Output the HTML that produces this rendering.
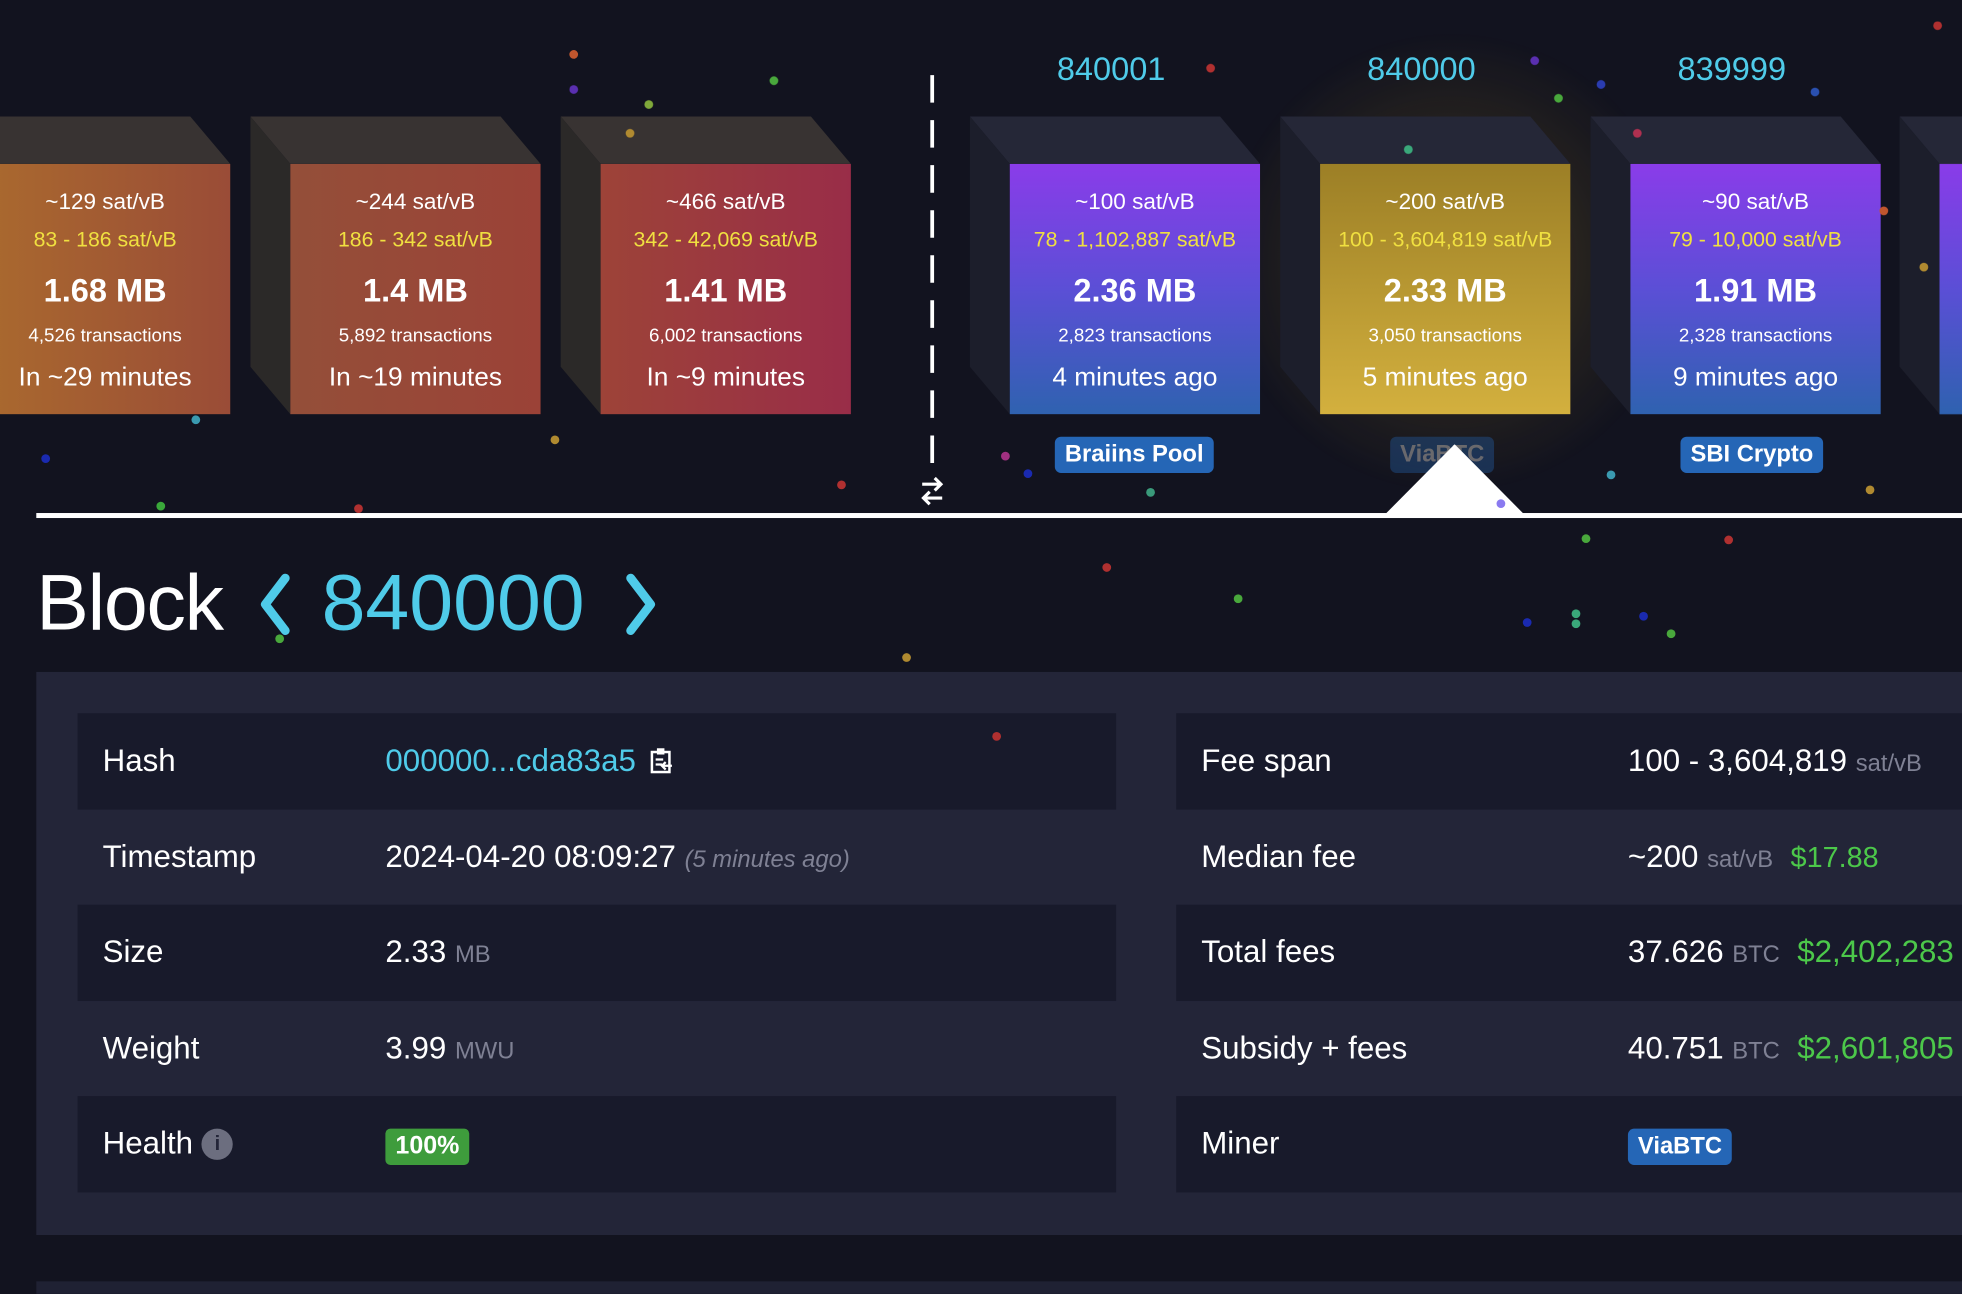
<!DOCTYPE html>
<html><head><meta charset="utf-8"><style>
*{margin:0;padding:0;box-sizing:border-box}
html,body{width:1962px;height:1288px;overflow:hidden;background:#12131f;font-family:"Liberation Sans",sans-serif;color:#fff}
#w{position:absolute;left:0;top:0;width:1568px;height:1030px;transform:scale(1.25128);transform-origin:0 0}
.abs{position:absolute}
.blk{position:absolute;top:93px;width:232px;height:238px}
.blk .top{position:absolute;left:0;top:0;width:232px;height:38px;clip-path:polygon(0 0,200px 0,232px 38px,32px 38px)}
.blk .side{position:absolute;left:0;top:0;width:32px;height:238px;clip-path:polygon(0 0,32px 38px,32px 238px,0 200px)}
.blk .front{position:absolute;left:32px;top:38px;width:200px;height:200px;text-align:center}
.front div{position:absolute;left:0;right:0;white-space:nowrap}
.f1{top:20px;font-size:18px}
.f2{top:51px;font-size:17px;color:#f0e040}
.f3{top:86px;font-size:26px;font-weight:bold}
.f4{top:129px;font-size:15px}
.f5{top:159px;font-size:21px}
.mp .top{background:#383332}.mp .side{background:#2b2928}
.mn .top{background:#252737}.mn .side{background:#1c1e2b}
.pur{background:linear-gradient(180deg,#8a3ce9,#5b4fd6 50%,#2f62b0)}
.gold{background:linear-gradient(180deg,#9c7f26,#d3b03e)}
.h{position:absolute;top:40px;font-size:26px;color:#4fcbe9;width:200px;text-align:center}
.badge{position:absolute;top:349px;height:29px;border-radius:5px;background:#2566b6;font-weight:bold;font-size:19px;line-height:29px;padding:0 8px}
.dot{position:absolute;width:7px;height:7px;border-radius:50%}
.row{position:absolute;height:77px;font-size:25px;line-height:77px}
.d{background:#181a2b}
.lab{position:absolute;left:20px}
.val{position:absolute;white-space:nowrap}
.u{color:#7f8194;font-size:19px}
.g{color:#4cc84a}
</style></head><body><div id="w">
<div class="abs" style="left:960px;top:10px;width:400px;height:400px;border-radius:50%;background:radial-gradient(circle,rgba(150,120,30,.35),rgba(150,120,30,0) 65%)"></div>

<div class="blk mp" style="left:-48px"><div class="top"></div><div class="side"></div><div class="front" style="background:linear-gradient(90deg,#aa6a2e,#9a4c37)">
<div class="f1">~129 sat/vB</div><div class="f2">83 - 186 sat/vB</div><div class="f3">1.68 MB</div><div class="f4">4,526 transactions</div><div class="f5">In ~29 minutes</div></div></div>
<div class="blk mp" style="left:200px"><div class="top"></div><div class="side"></div><div class="front" style="background:linear-gradient(90deg,#944f39,#9b4237)">
<div class="f1">~244 sat/vB</div><div class="f2">186 - 342 sat/vB</div><div class="f3">1.4 MB</div><div class="f4">5,892 transactions</div><div class="f5">In ~19 minutes</div></div></div>
<div class="blk mp" style="left:448px"><div class="top"></div><div class="side"></div><div class="front" style="background:linear-gradient(90deg,#9d4338,#992d48)">
<div class="f1">~466 sat/vB</div><div class="f2">342 - 42,069 sat/vB</div><div class="f3">1.41 MB</div><div class="f4">6,002 transactions</div><div class="f5">In ~9 minutes</div></div></div>

<svg class="abs" style="left:735px;top:55px" width="20" height="350"><line x1="10" y1="5" x2="10" y2="320" stroke="#fff" stroke-width="3" stroke-dasharray="22,14"/>
<path d="M2 332h14M12 327l5 5-5 5M18 343H4M8 338l-5 5 5 5" stroke="#fff" stroke-width="2.5" fill="none"/></svg>

<div class="h" style="left:788px">840001</div><div class="h" style="left:1036px">840000</div><div class="h" style="left:1284px">839999</div>
<div class="blk mn" style="left:775px"><div class="top"></div><div class="side"></div><div class="front pur">
<div class="f1">~100 sat/vB</div><div class="f2">78 - 1,102,887 sat/vB</div><div class="f3">2.36 MB</div><div class="f4">2,823 transactions</div><div class="f5">4 minutes ago</div></div></div>
<div class="blk mn" style="left:1023px"><div class="top"></div><div class="side"></div><div class="front gold">
<div class="f1">~200 sat/vB</div><div class="f2">100 - 3,604,819 sat/vB</div><div class="f3">2.33 MB</div><div class="f4">3,050 transactions</div><div class="f5">5 minutes ago</div></div></div>
<div class="blk mn" style="left:1271px"><div class="top"></div><div class="side"></div><div class="front pur">
<div class="f1">~90 sat/vB</div><div class="f2">79 - 10,000 sat/vB</div><div class="f3">1.91 MB</div><div class="f4">2,328 transactions</div><div class="f5">9 minutes ago</div></div></div>
<div class="blk mn" style="left:1518px"><div class="top"></div><div class="side"></div><div class="front pur"></div></div>

<div class="badge" style="left:843px">Braiins Pool</div>
<div class="badge" style="left:1111px;opacity:.35">ViaBTC</div>
<div class="badge" style="left:1343px">SBI Crypto</div>
<div class="abs" style="left:1106px;top:355px;width:113px;height:57px;background:#fff;clip-path:polygon(50% 0,100% 100%,0 100%)"></div>
<div class="abs" style="left:29px;top:410px;width:1539px;height:4px;background:#fff"></div>

<div class="abs" style="left:29px;top:442px;font-size:63px;line-height:80px;white-space:nowrap;letter-spacing:-1px">Block</div>
<svg class="abs" style="left:204px;top:458px" width="32" height="50"><path d="M24 4 8 25l16 21" stroke="#4fcbe9" stroke-width="7" fill="none" stroke-linecap="round" stroke-linejoin="round"/></svg>
<div class="abs" style="left:257px;top:442px;font-size:63px;line-height:80px;color:#4fcbe9">840000</div>
<svg class="abs" style="left:496px;top:458px" width="32" height="50"><path d="M8 4l16 21L8 46" stroke="#4fcbe9" stroke-width="7" fill="none" stroke-linecap="round" stroke-linejoin="round"/></svg>

<div class="abs" style="left:29px;top:537px;width:1539px;height:450px;background:#232538"></div>
<div class="row d" style="left:62px;top:570px;width:830px"><span class="lab">Hash</span><span class="val" style="left:246px;color:#4fcbe9">000000...cda83a5 <svg width="20" height="22" style="vertical-align:-3px;margin-left:4px" viewBox="0 0 20 22"><rect x="2" y="4" width="14" height="16" fill="none" stroke="#fff" stroke-width="2"/><rect x="6" y="1" width="6" height="5" fill="#fff"/><path d="M5 10h6M5 14h5M18 15h-7M13 12l-3 3 3 3" stroke="#fff" stroke-width="1.8" fill="none"/></svg></span></div>
<div class="row" style="left:62px;top:647px;width:830px"><span class="lab">Timestamp</span><span class="val" style="left:246px">2024-04-20 08:09:27 <i class="u">(5 minutes ago)</i></span></div>
<div class="row d" style="left:62px;top:723px;width:830px"><span class="lab">Size</span><span class="val" style="left:246px">2.33 <span class="u">MB</span></span></div>
<div class="row" style="left:62px;top:800px;width:830px"><span class="lab">Weight</span><span class="val" style="left:246px">3.99 <span class="u">MWU</span></span></div>
<div class="row d" style="left:62px;top:876px;width:830px"><span class="lab">Health <span style="display:inline-block;width:25px;height:25px;border-radius:50%;background:#6c6e7f;color:#232538;font-size:16px;line-height:25px;text-align:center;vertical-align:3px;font-weight:bold">i</span></span><span class="val" style="left:246px;top:26px;height:29px;line-height:29px;background:#3e9c3c;border-radius:4px;padding:0 8px;font-weight:bold;font-size:20px">100%</span></div>

<div class="row d" style="left:940px;top:570px;width:628px"><span class="lab">Fee span</span><span class="val" style="left:361px">100 - 3,604,819 <span class="u">sat/vB</span></span></div>
<div class="row" style="left:940px;top:647px;width:628px"><span class="lab">Median fee</span><span class="val" style="left:361px">~200 <span class="u">sat/vB</span> &nbsp;<span class="g" style="font-size:23px">$17.88</span></span></div>
<div class="row d" style="left:940px;top:723px;width:628px"><span class="lab">Total fees</span><span class="val" style="left:361px">37.626 <span class="u">BTC</span> &nbsp;<span class="g">$2,402,283</span></span></div>
<div class="row" style="left:940px;top:800px;width:628px"><span class="lab">Subsidy + fees</span><span class="val" style="left:361px">40.751 <span class="u">BTC</span> &nbsp;<span class="g">$2,601,805</span></span></div>
<div class="row d" style="left:940px;top:876px;width:628px"><span class="lab">Miner</span><span class="val" style="left:361px;top:26px;height:29px;line-height:29px;background:#2566b6;border-radius:5px;padding:0 8px;font-weight:bold;font-size:19px">ViaBTC</span></div>
<div class="abs" style="left:29px;top:1024px;width:1539px;height:10px;background:#1f2133"></div>

<div class="dot" style="left:455px;top:40px;background:#c0562e"></div>
<div class="dot" style="left:455px;top:68px;background:#5a2fb0"></div>
<div class="dot" style="left:515px;top:80px;background:#7fa83a"></div>
<div class="dot" style="left:500px;top:103px;background:#b08a30"></div>
<div class="dot" style="left:615px;top:61px;background:#49a83c"></div>
<div class="dot" style="left:964px;top:51px;background:#b03030"></div>
<div class="dot" style="left:1223px;top:45px;background:#5a2fb0"></div>
<div class="dot" style="left:1276px;top:64px;background:#2a3cb0"></div>
<div class="dot" style="left:1242px;top:75px;background:#49a83c"></div>
<div class="dot" style="left:1447px;top:70px;background:#2a50b0"></div>
<div class="dot" style="left:1545px;top:17px;background:#b03030"></div>
<div class="dot" style="left:1305px;top:103px;background:#b03050"></div>
<div class="dot" style="left:1122px;top:116px;background:#3aa87a"></div>
<div class="dot" style="left:153px;top:332px;background:#3a9ab0"></div>
<div class="dot" style="left:33px;top:363px;background:#1a2ab0"></div>
<div class="dot" style="left:125px;top:401px;background:#3aa83a"></div>
<div class="dot" style="left:283px;top:403px;background:#b03030"></div>
<div class="dot" style="left:440px;top:348px;background:#b08a30"></div>
<div class="dot" style="left:669px;top:384px;background:#b03030"></div>
<div class="dot" style="left:800px;top:361px;background:#a03080"></div>
<div class="dot" style="left:818px;top:375px;background:#1a2ab0"></div>
<div class="dot" style="left:916px;top:390px;background:#3a9a7a"></div>
<div class="dot" style="left:1284px;top:376px;background:#3a9ab0"></div>
<div class="dot" style="left:1491px;top:388px;background:#b08a30"></div>
<div class="dot" style="left:1196px;top:399px;background:#8a7af0"></div>
<div class="dot" style="left:1264px;top:427px;background:#49a83c"></div>
<div class="dot" style="left:1378px;top:428px;background:#b03030"></div>
<div class="dot" style="left:881px;top:450px;background:#b03030"></div>
<div class="dot" style="left:986px;top:475px;background:#49a83c"></div>
<div class="dot" style="left:1217px;top:494px;background:#1a2ab0"></div>
<div class="dot" style="left:1256px;top:487px;background:#3aa87a"></div>
<div class="dot" style="left:1256px;top:495px;background:#3aa87a"></div>
<div class="dot" style="left:1310px;top:489px;background:#1a2ab0"></div>
<div class="dot" style="left:1332px;top:503px;background:#49a83c"></div>
<div class="dot" style="left:721px;top:522px;background:#b08a30"></div>
<div class="dot" style="left:220px;top:507px;background:#49a83c"></div>
<div class="dot" style="left:793px;top:585px;background:#b03030"></div>
<div class="dot" style="left:1502px;top:165px;background:#c0562e"></div>
<div class="dot" style="left:1534px;top:210px;background:#b08a30"></div>
</div></body></html>
